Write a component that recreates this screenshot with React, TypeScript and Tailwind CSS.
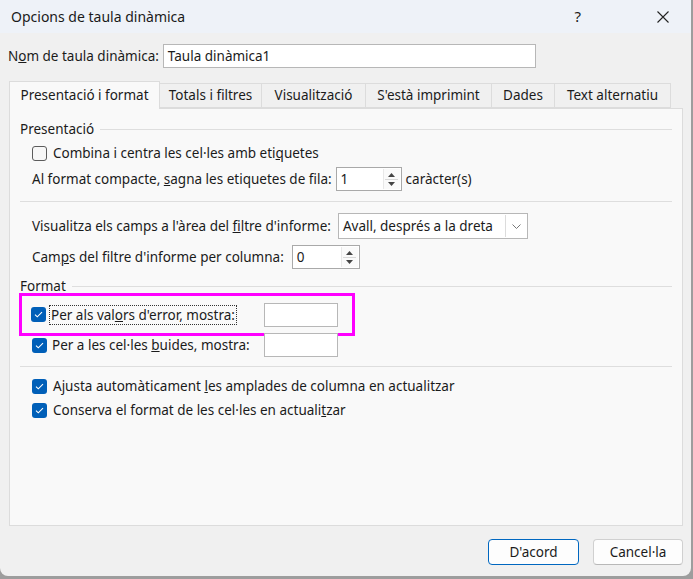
import React from 'react';

const FONT = { fontFamily: '"Noto Sans", "Open Sans", sans-serif' };

function Check({ checked }: { checked?: boolean }) {
  if (!checked) {
    return <span className="inline-block w-[15px] h-[15px] rounded-[3px] border border-[#5c5c5c] bg-[#f7f7f7] shrink-0" />;
  }
  return (
    <span className="inline-flex items-center justify-center w-[15px] h-[15px] rounded-[3px] bg-[#005fb8] shrink-0">
      <svg width="9" height="7" viewBox="0 0 9 7" fill="none">
        <path d="M1 3.6 L3.3 5.8 L8 1.2" stroke="#ffffff" strokeWidth="1.1" />
      </svg>
    </span>
  );
}

function Spin({ value, width }: { value: string; width: string }) {
  return (
    <div className={`flex h-[24px] border border-[#a9a9a9] bg-white ${width}`}>
      <span className="flex-1 pl-[4px] leading-[22px] text-[#1a1a1a]">{value}</span>
      <div className="w-[17px] flex flex-col items-center justify-center gap-[2px] my-[1px] mr-[1px] bg-[#fafafa] border-l border-[#e8e8e8]">
        <svg width="7" height="4" viewBox="0 0 7 4"><path d="M0 4 L3.5 0 L7 4 Z" fill="#444" /></svg>
        <span className="w-[13px] h-px bg-[#d8d8d8]" />
        <svg width="7" height="4" viewBox="0 0 7 4"><path d="M0 0 L3.5 4 L7 0 Z" fill="#444" /></svg>
      </div>
    </div>
  );
}

function Group({ title }: { title: string }) {
  return (
    <div className="flex items-center gap-[6px] h-[20px]">
      <span>{title}</span>
      <span className="flex-1 h-px bg-[#dedede] mt-[1px]" />
    </div>
  );
}

const TABS = [
  { label: 'Totals i filtres', w: 'w-[102px]' },
  { label: 'Visualització', w: 'w-[104px]' },
  { label: "S'està imprimint", w: 'w-[126px]' },
  { label: 'Dades', w: 'w-[63px]' },
  { label: 'Text alternatiu', w: 'w-[116px]' },
];

export default function App() {
  return (
    <div className="w-[693px] h-[579px] bg-[#9d9d9d] text-[13.5px] text-[#1b1b1b]" style={FONT}>
      <div className="w-[691px] h-[576px] bg-[#f0f0f0] rounded-b-[8px] flex flex-col overflow-hidden">
        {/* Title bar */}
        <div className="h-[33px] bg-[#eef2f8] flex items-center pl-[11px] shrink-0">
          <span className="text-[14px] text-[#1a1a1a]">Opcions de taula dinàmica</span>
          <span className="ml-auto mr-[76px] text-[15px]">?</span>
          <svg width="12" height="12" viewBox="0 0 12 12" className="mr-[22px]">
            <path d="M0.5 0.5 L11.5 11.5 M11.5 0.5 L0.5 11.5" stroke="#222" strokeWidth="1.1" />
          </svg>
        </div>

        {/* Name row */}
        <div className="flex items-center gap-[4px] pl-[8px] mt-[11px]">
          <span>N<u>o</u>m de taula dinàmica:</span>
          <div className="w-[373px] h-[24px] border border-[#b7b7b7] bg-white pl-[4px] leading-[22px]">Taula dinàmica1</div>
        </div>

        {/* Tabs */}
        <div className="flex items-end pl-[9px] mt-[14px] h-[26px]">
          <div className="w-[151px] h-[28px] bg-[#f9f9f9] border border-b-0 border-[#dcdcdc] flex items-center justify-center relative z-10 -mb-px">
            Presentació i format
          </div>
          {TABS.map(t => (
            <div key={t.label} className={`${t.w} h-[25px] border border-l-0 border-[#dcdcdc] bg-[#f0f0f0] flex items-center justify-center`}>
              {t.label}
            </div>
          ))}
        </div>

        {/* Panel */}
        <div className="mx-[9px] w-[674px] h-[418px] bg-[#f9f9f9] border border-[#dcdcdc] pl-[10px] pr-[10px] pt-[10px]">
          <Group title="Presentació" />
          <div className="pl-[12px]">
            <div className="flex items-center gap-[6px] h-[24px] mt-[2px]">
              <Check />
              <span>Combina i centra les cel·les amb eti<u>q</u>uetes</span>
            </div>
            <div className="flex items-center gap-[4px] mt-[2px]">
              <span>Al format compacte, <u>s</u>agna les etiquetes de fila:</span>
              <Spin value="1" width="w-[66px]" />
              <span>caràcter(s)</span>
            </div>
          </div>
          <div className="h-px bg-[#dedede] mt-[10px]" />
          <div className="pl-[12px] mt-[11px]">
            <div className="flex items-center gap-[7px]">
              <span>Visualitza els camps a l'àrea del <u>f</u>iltre d'informe:</span>
              <div className="w-[190px] h-[26px] border border-[#b7b7b7] bg-white flex items-center">
                <span className="flex-1 pl-[4px]">Avall, després a la dreta</span>
                <span className="w-[22px] h-[22px] border-l border-[#dcdcdc] flex items-center justify-center">
                  <svg width="9" height="5" viewBox="0 0 9 5"><path d="M0.5 0.5 L4.5 4.5 L8.5 0.5" stroke="#777" fill="none" /></svg>
                </span>
              </div>
            </div>
            <div className="flex items-center gap-[8px] mt-[6px]">
              <span>Cam<u>p</u>s del filtre d'informe per columna:</span>
              <Spin value="0" width="w-[68px]" />
            </div>
          </div>
          <div className="mt-[7px]">
            <Group title="Format" />
          </div>
          <div className="w-[336px] h-[43px] border-[3px] border-[#ff00ff] -ml-px -mt-[3px] flex items-center pl-[9px]">
            <Check checked />
            <span className="ml-[3px] px-[1px] border border-dotted border-[#333] leading-[18px]">Per als val<u>o</u>rs d'error, mostra:</span>
            <div className="ml-[27px] w-[74px] h-[24px] border border-[#b7b7b7] bg-white" />
          </div>
          <div className="flex items-center pl-[12px] -mt-[3px] h-[24px]">
            <Check checked />
            <span className="ml-[5px]">Per a les cel·les <u>b</u>uides, mostra:</span>
            <div className="ml-auto mr-[334px] w-[74px] h-[24px] border border-[#b7b7b7] bg-white" />
          </div>
          <div className="h-px bg-[#dedede] mt-[9px]" />
          <div className="pl-[12px] mt-[7px]">
            <div className="flex items-center gap-[6px] h-[24px]">
              <Check checked />
              <span>Ajusta automàticament <u>l</u>es amplades de columna en actualitzar</span>
            </div>
            <div className="flex items-center gap-[6px] h-[24px]">
              <Check checked />
              <span>Conserva el format de les cel·les en actuali<u>t</u>zar</span>
            </div>
          </div>
        </div>

        {/* Buttons */}
        <div className="flex justify-end gap-[14px] pr-[8px] mt-[13px]">
          <button className="w-[91px] h-[26px] rounded-[4px] border border-[#0067c0] bg-[#fdfdfd] text-[#1b1b1b]">D'acord</button>
          <button className="w-[90px] h-[26px] rounded-[4px] border border-[#d0d0d0] border-b-[#b8b8b8] bg-[#fdfdfd] text-[#1b1b1b]">Cancel·la</button>
        </div>
      </div>
    </div>
  );
}
